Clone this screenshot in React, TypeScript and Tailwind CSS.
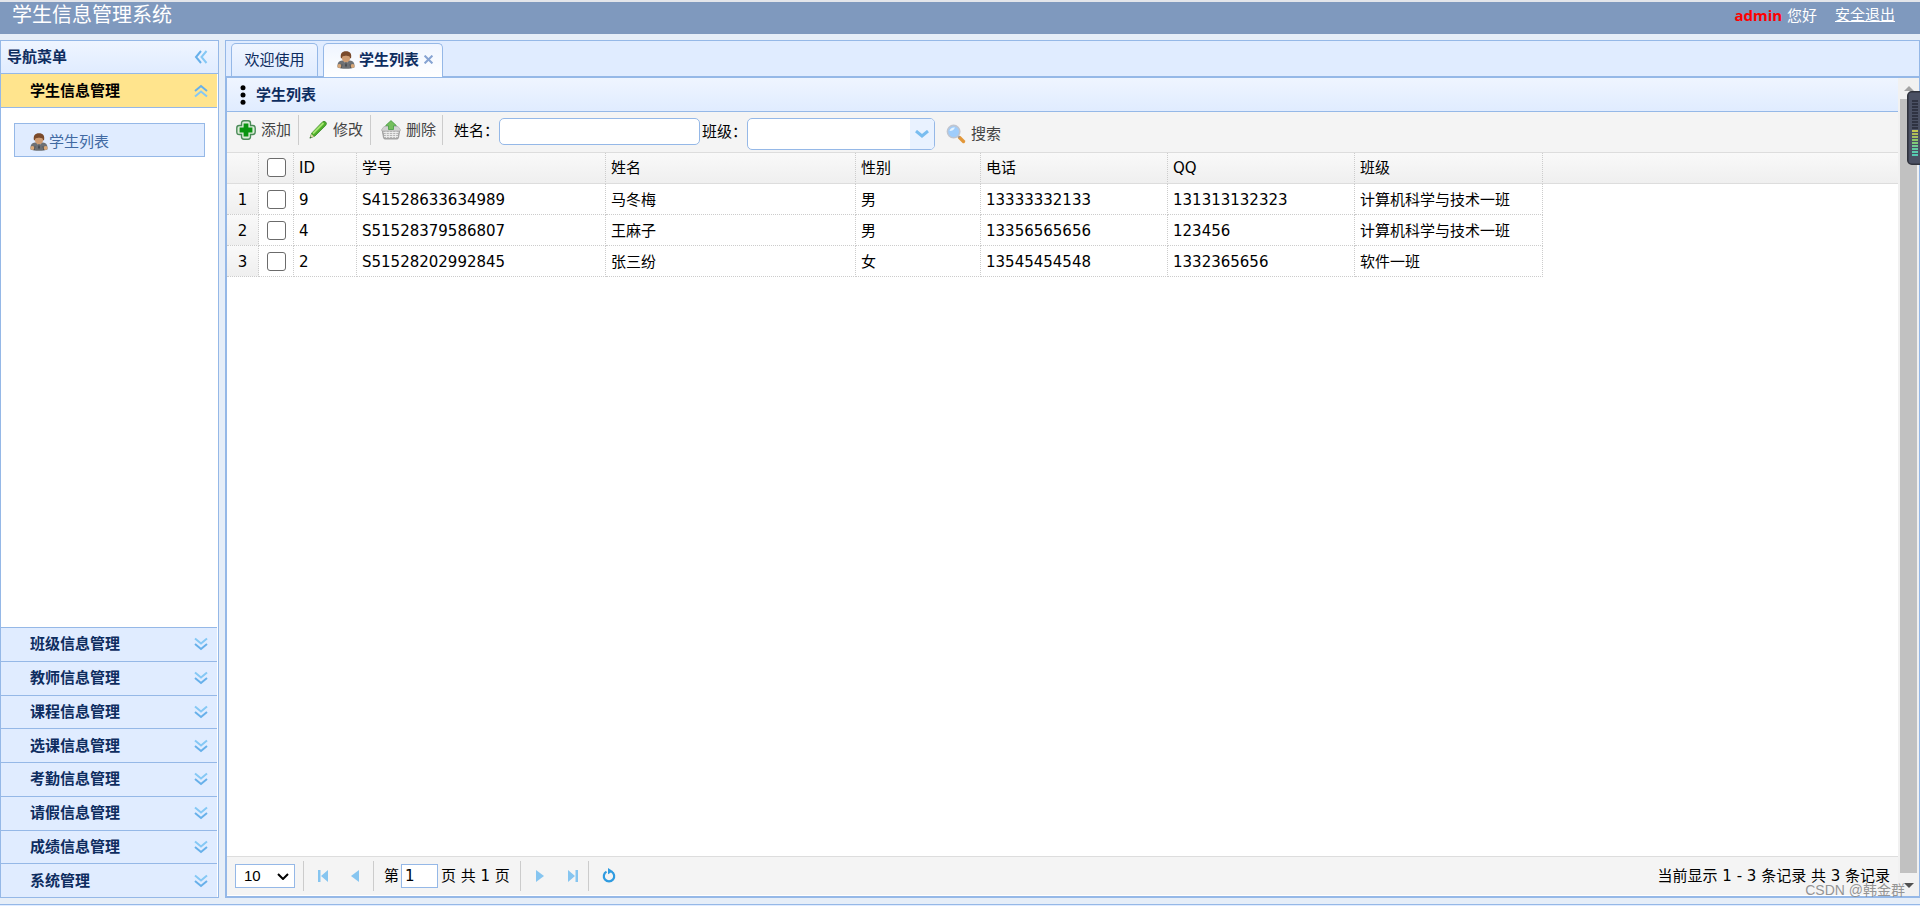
import type { ReactNode } from "react";

type Student = {
  id: number;
  sn: string;
  name: string;
  sex: string;
  mobile: string;
  qq: string;
  clazz: string;
};

const students: Student[] = [
  { id: 9, sn: "S41528633634989", name: "马冬梅", sex: "男", mobile: "13333332133", qq: "131313132323", clazz: "计算机科学与技术一班" },
  { id: 4, sn: "S51528379586807", name: "王麻子", sex: "男", mobile: "13356565656", qq: "123456", clazz: "计算机科学与技术一班" },
  { id: 2, sn: "S51528202992845", name: "张三纷", sex: "女", mobile: "13545454548", qq: "1332365656", clazz: "软件一班" },
];

const menus = [
  "班级信息管理",
  "教师信息管理",
  "课程信息管理",
  "选课信息管理",
  "考勤信息管理",
  "请假信息管理",
  "成绩信息管理",
  "系统管理",
];

const columns = ["ID", "学号", "姓名", "性别", "电话", "QQ", "班级"];

const UserIcon = () => (
  <svg className="size-[18px] shrink-0" viewBox="0 0 18 18">
    <path d="M.6 16.500C0 12.500 1.500 9.800 5 9.500h8c3.500.3 5 3 4.400 7-3 1.800-13.800 1.800-16.800 0z" fill="#6d7074" />
    <path d="M6.500 9.500L9 14l2.500-4.500z" fill="#a9abae" />
    <path d="M8.400 11h1.200l.4 3.500-1 2-1-2z" fill="#4a4c50" />
    <path d="M4 17l1-3.500M14 17l-1-3.500" stroke="#45484c" strokeWidth="1" />
    <circle cx="2.400" cy="15" r="2" fill="#d9a878" />
    <circle cx="15.600" cy="15" r="2" fill="#d9a878" />
    <path d="M5 4.500h8v2.800c0 2.600-2 4-4 4s-4-1.400-4-4z" fill="#cf9c72" />
    <path d="M4 7.500C3 2.500 5 .3 9 .3s6 2.200 5 7.200l-1-.5c0-1.500-.8-2.300-4-2.300S5 5.500 5 7z" fill="#7a4a2b" />
  </svg>
);

const AddIcon = () => (
  <svg className="size-5" viewBox="0 0 20 20">
    <path d="M5.500 3.200Q5.500.8 7.900.8h4.200q2.400 0 2.400 2.400v2.300h2.300q2.400 0 2.400 2.400v4.200q0 2.400-2.400 2.400h-2.300v2.300q0 2.400-2.400 2.400H7.900q-2.400 0-2.400-2.400v-2.300H3.200Q.8 14.500.8 12.100V7.900q0-2.400 2.400-2.400h2.300z" fill="#dcecd9" stroke="#4a8a57" strokeWidth="1.400" />
    <path d="M7.600 3.600h4.800v4h4v4.800h-4v4H7.600v-4h-4V7.600h4z" fill="#0a9410" />
  </svg>
);

const EditIcon = () => (
  <svg className="size-5" viewBox="0 0 20 20">
    <path d="M2 18l1.800-5L14.200 2.200q1.800-1.800 3.500-.2 1.600 1.500 0 3.400L7 16z" fill="#4dae2a" stroke="#3b8628" strokeWidth=".8" />
    <path d="M5 13.500L15.500 3" stroke="#a5e36f" strokeWidth="1.800" />
    <path d="M2 18l1.300-4L6 16.400z" fill="#ddd3a5" />
    <path d="M1.600 18.500l.8-2 1.300 1.200z" fill="#356a35" />
  </svg>
);

const RemoveIcon = () => (
  <svg className="size-5" viewBox="0 0 20 20">
    <path d="M1.200 10h17.600l-1.300 7.700q-.2 1.300-1.500 1.300H4q-1.300 0-1.500-1.300z" fill="#b4b4b4" stroke="#8f8f8f" strokeWidth=".8" />
    <path d="M2.500 12.500h15M3 14.500h14M3 16.500h14M5 11l.6 7M8.300 11v7M11.700 11v7M15 11l-.6 7" stroke="#efefef" strokeWidth=".9" />
    <path d="M3 6.500h14l2.300 3q.4 1.500-1 1.500H1.700q-1.400 0-1-1.500z" fill="#d3d3d3" stroke="#adadad" strokeWidth=".7" />
    <path d="M10 .6l5.400 5H12.500V9.500h-5V5.600H4.600z" fill="#74bf5c" stroke="#469a43" strokeWidth=".8" />
  </svg>
);

const SearchIcon = () => (
  <svg className="size-5" viewBox="0 0 20 20">
    <path d="M13.500 13.500l4 4" stroke="#e29739" strokeWidth="3.400" strokeLinecap="round" />
    <path d="M11.500 11.500l2 2" stroke="#999" strokeWidth="2" />
    <circle cx="7.600" cy="7.600" r="6.200" fill="#9fcdfb" stroke="#c0c5cf" strokeWidth="1.600" />
    <path d="M3.500 7q1-4 5.500-3.500Q7.500 7 3.500 7z" fill="#e6f4ff" />
  </svg>
);

const DoubleChevron = ({ className = "" }: { className?: string }) => (
  <svg className={`size-[14px] ${className}`} viewBox="0 0 14 14" fill="none" strokeWidth="2">
    <path d="M1 1.500l6 5 6-5" stroke="#85c8f5" />
    <path d="M1 7l6 5 6-5" stroke="#67b0ea" />
  </svg>
);

const Separator = () => <span className="h-[30px] w-px shrink-0 bg-[#ccc]" />;

const ToolButton = ({ icon, children }: { icon: ReactNode; children: ReactNode }) => (
  <button type="button" className="flex h-[30px] items-center gap-[5px] text-[#444]">
    {icon}
    {children}
  </button>
);

const PageButton = ({ label, d }: { label: string; d: string }) => (
  <button type="button" aria-label={label} className="flex size-[30px] items-center justify-center">
    <svg className="size-4" viewBox="0 0 16 16" fill="#86c5f0">
      <path d={d} />
    </svg>
  </button>
);

const Header = () => (
  <header className="flex h-[34px] shrink-0 items-start justify-between border-t-2 border-[#e3e5ea] bg-[#7f99be] pr-[25px] pl-3 text-white">
    <h1 className="text-xl leading-[26px]">学生信息管理系统</h1>
    <div className="flex gap-[18px] leading-[26px]">
      <span>
        <b className="font-['Open_Sans','Noto_Sans_CJK_SC',sans-serif] text-[#f00]">admin</b> 您好
      </span>
      <a href="#" className="underline">安全退出</a>
    </div>
  </header>
);

const Sidebar = () => (
  <aside className="flex w-[219px] shrink-0 flex-col border border-[#95b8e7] bg-white">
    <div className="flex h-[33px] shrink-0 items-center justify-between border-b border-[#95b8e7] bg-linear-to-b from-[#eff5ff] to-[#e0ecff] pr-[10px] pl-[6px]">
      <h2 className="font-bold text-[#0e2d5f]">导航菜单</h2>
      <button type="button" aria-label="收起">
        <DoubleChevron className="rotate-90" />
      </button>
    </div>
    <button type="button" className="mr-px flex h-[34px] shrink-0 items-center justify-between border-b border-[#95b8e7] bg-[#ffe48d] pr-[9px] pl-[29px] font-bold text-black">
      学生信息管理
      <DoubleChevron className="rotate-180" />
    </button>
    <div className="flex-1 px-[13px] py-[15px]">
      <a href="#" className="flex h-[34px] items-center gap-px border border-[#95b8e7] bg-[#e0ecff] pt-1 pl-[15px] text-[#416aa3]">
        <UserIcon />
        学生列表
      </a>
    </div>
    <nav className="mr-px flex h-[270px] shrink-0 flex-col">
      {menus.map((menu) => (
        <button type="button" key={menu} className="flex flex-1 items-center justify-between border-t border-[#95b8e7] bg-[#e0ecff] pr-[9px] pl-[29px] font-bold text-[#0e2d5f]">
          {menu}
          <DoubleChevron />
        </button>
      ))}
    </nav>
  </aside>
);

const Tabs = () => (
  <div className="flex h-[38px] shrink-0 items-end gap-[5px] border-t border-r border-b-2 border-[#95b8e7] bg-[#e0ecff] pl-[5px]">
    <button type="button" className="h-[33px] w-[87px] rounded-t-[5px] border border-b-0 border-[#95b8e7] bg-linear-to-b from-[#eff5ff] to-[#e0ecff] text-[#0e2d5f]">
      欢迎使用
    </button>
    <div className="-mb-px flex h-[34px] w-[120px] items-center rounded-t-[5px] border border-b-0 border-[#95b8e7] bg-linear-to-b from-[#eff5ff] to-white pb-0.5 pl-[13px] font-bold text-[#0e2d5f]">
      <UserIcon />
      <button type="button" className="ml-1">学生列表</button>
      <button type="button" aria-label="关闭" className="ml-[5px]">
        <svg className="size-[9px]" viewBox="0 0 8 8" stroke="#86a3d2" strokeWidth="1.800">
          <path d="M.5.5l7 7M7.500.5l-7 7" />
        </svg>
      </button>
    </div>
  </div>
);

const Toolbar = () => (
  <div className="flex h-[41px] shrink-0 items-start border-b border-[#ddd] bg-[#f4f4f4] pt-[3px] pl-[9px]">
    <div className="flex gap-[7px]">
      <ToolButton icon={<AddIcon />}>添加</ToolButton>
      <Separator />
    </div>
    <div className="ml-[9px] flex gap-[7px]">
      <ToolButton icon={<EditIcon />}>修改</ToolButton>
      <Separator />
    </div>
    <div className="ml-[10px] flex gap-[6px]">
      <ToolButton icon={<RemoveIcon />}>删除</ToolButton>
      <Separator />
    </div>
    <label htmlFor="studentName" className="ml-[11px] leading-[32px]">姓名：</label>
    <input id="studentName" className="mt-[3px] h-[27px] w-[201px] rounded-[5px] border border-[#95b8e7] bg-white px-1 outline-none" />
    <label htmlFor="clazzList" className="ml-[2px] leading-[34px]">班级：</label>
    <div className="relative mt-[3px] h-8 w-[188px] overflow-hidden rounded-[5px] border border-[#95b8e7] bg-white">
      <select id="clazzList" defaultValue="" className="size-full appearance-none px-1 outline-none">
        <option value=""></option>
        <option>计算机科学与技术一班</option>
        <option>软件一班</option>
      </select>
      <span className="pointer-events-none absolute inset-y-0 right-0 flex w-6 items-center justify-center bg-[#e9f2ff]">
        <svg className="h-2 w-[14px]" viewBox="0 0 14 8" fill="none" stroke="#79bdf0" strokeWidth="3">
          <path d="M1 1l6 5 6-5" />
        </svg>
      </span>
    </div>
    <div className="mt-1 ml-[11px]">
      <ToolButton icon={<SearchIcon />}>搜索</ToolButton>
    </div>
  </div>
);

const cell = "border-r border-b border-dotted border-[#ccc] px-[5px]";
const textCell = "border-r border-b border-dotted border-[#ccc] px-[5px] pt-0.5";
const headCell = "border-r border-b border-[#ddd] border-r-[#ccc] px-[5px] font-normal [border-right-style:dotted]";
const checkbox = "mx-auto block size-[19px] appearance-none rounded-[3px] border border-[#6b6b6b] bg-white";

const StudentTable = () => (
  <table className="w-full table-fixed border-separate border-spacing-0 text-left">
    <colgroup>
      <col className="w-8" />
      <col className="w-[35px]" />
      <col className="w-[63px]" />
      <col className="w-[249px]" />
      <col className="w-[250px]" />
      <col className="w-[125px]" />
      <col className="w-[187px]" />
      <col className="w-[187px]" />
      <col className="w-[188px]" />
      <col />
    </colgroup>
    <thead>
      <tr className="h-[31px] bg-linear-to-b from-[#f9f9f9] to-[#efefef]">
        <th className={headCell} />
        <th className={`${headCell} pb-0.5`}>
          <input type="checkbox" aria-label="全选" className={checkbox} />
        </th>
        {columns.map((column) => (
          <th key={column} className={headCell}>
            {column}
          </th>
        ))}
        <th className="border-b border-[#ddd]" />
      </tr>
    </thead>
    <tbody>
      {students.map((student, index) => (
        <tr key={student.id} className="h-[31px]">
          <td className={`${textCell} bg-linear-to-b from-[#f9f9f9] to-[#efefef] text-center`}>{index + 1}</td>
          <td className={cell}>
            <input type="checkbox" aria-label={student.name} className={checkbox} />
          </td>
          <td className={textCell}>{student.id}</td>
          <td className={textCell}>{student.sn}</td>
          <td className={textCell}>{student.name}</td>
          <td className={textCell}>{student.sex}</td>
          <td className={textCell}>{student.mobile}</td>
          <td className={textCell}>{student.qq}</td>
          <td className={textCell}>{student.clazz}</td>
        </tr>
      ))}
    </tbody>
  </table>
);

const Pagination = () => (
  <footer className="mb-px flex h-[39px] shrink-0 items-center border-t border-[#ddd] bg-[#f4f4f4] pr-2 pl-2">
    <div className="relative">
      <select aria-label="每页条数" className="block h-6 w-[60px] appearance-none border border-[#95b8e7] bg-white pl-2 font-['Liberation_Sans',sans-serif] text-[15px] leading-[22px] outline-none">
        <option>10</option>
        <option>20</option>
        <option>50</option>
      </select>
      <svg className="pointer-events-none absolute top-[9px] right-[6px] h-[7px] w-3" viewBox="0 0 12 7" fill="none" stroke="#000" strokeWidth="2">
        <path d="M1 1l5 5 5-5" />
      </svg>
    </div>
    <div className="ml-2 flex items-center">
      <Separator />
      <span className="w-1" />
      <PageButton label="首页" d="M3 2h2.500v12H3zM13 2v12L6 8z" />
      <span className="w-0.5" />
      <PageButton label="上一页" d="M12 2v12L4 8z" />
      <span className="w-[3px]" />
      <Separator />
    </div>
    <label htmlFor="pageNumber" className="ml-[10px]">第</label>
    <input id="pageNumber" defaultValue="1" className="ml-[2px] h-6 w-[37px] border border-[#95b8e7] bg-white px-[3px] outline-none" />
    <span className="mr-[10px] ml-[3px]">页 共 1 页</span>
    <Separator />
    <span className="w-1" />
    <PageButton label="下一页" d="M4 2v12l8-6z" />
    <span className="w-[3px]" />
    <PageButton label="尾页" d="M3 2v12l7-6zM10.500 2H13v12h-2.500z" />
    <Separator />
    <button type="button" aria-label="刷新" className="ml-3">
      <svg className="size-4" viewBox="0 0 16 16" fill="none">
        <path d="M10.500 3.600a5.200 5.200 0 1 1-5 0" stroke="#2f9be0" strokeWidth="2.200" />
        <path d="M7 0l5 3.200L7 6.200z" fill="#2f9be0" />
      </svg>
    </button>
    <span className="ml-auto">当前显示 1 - 3 条记录 共 3 条记录</span>
  </footer>
);

// fake scrollbar of the tab body
const Scrollbar = () => (
  <div className="flex w-[21px] shrink-0 flex-col items-center bg-[#f1f1f1]">
    <svg className="my-2 h-[5px] w-[10px]" viewBox="0 0 10 5" fill="#a3a3a3">
      <path d="M0 5l5-5 5 5z" />
    </svg>
    <div className="w-[17px] flex-1 bg-[#c1c1c1]" />
    <svg className="mt-[10px] mb-2 h-[5px] w-[10px]" viewBox="0 0 10 5" fill="#505050">
      <path d="M0 0l5 5 5-5z" />
    </svg>
  </div>
);

const meter = [
  "#2f3342", "#2f3342", "#2f3342", "#2f3342", "#2f3342", "#2f3342", "#2f3342", "#2f3342", "#2f3342", "#2f3342",
  "#c3c850", "#b0bd56", "#a5c060", "#8cc866", "#80cc78", "#70cc90", "#62cca0", "#5accac", "#54cab2",
];

const LevelMeter = () => (
  <svg className="absolute top-[91px] right-0 h-[74px] w-[13px]" viewBox="0 0 13 74">
    <rect x=".8" y=".8" width="18" height="72.400" rx="4" fill="#4b5164" stroke="#30333d" strokeWidth="1.600" />
    {meter.map((color, i) => (
      <rect key={i} x="5" y={9 + i * 3} width="6" height="2" fill={color} />
    ))}
  </svg>
);

const App = () => {
  return (
    <div className="relative flex h-screen flex-col overflow-hidden bg-[#e6eef8] font-['DejaVu_Sans','Noto_Sans_CJK_SC',sans-serif] text-[15px] leading-5 text-black">
      <Header />
      <div className="flex min-h-0 flex-1 gap-[6px] pt-[6px] pb-[6px]">
        <Sidebar />
        <main className="flex min-w-0 flex-1 flex-col border-l border-[#95b8e7]">
          <Tabs />
          <div className="flex min-h-0 flex-1 border-r border-b-2 border-l border-[#95b8e7] bg-white">
            <section className="flex min-w-0 flex-1 flex-col">
              <div className="flex h-[34px] shrink-0 items-center border-b border-[#95b8e7] bg-linear-to-b from-[#eff5ff] to-[#e0ecff] pl-[13px]">
                <svg className="h-5 w-[6px]" viewBox="0 0 6 20">
                  <circle cx="3" cy="2.700" r="2.500" />
                  <circle cx="3" cy="10" r="2.500" />
                  <circle cx="3" cy="17.300" r="2.500" />
                </svg>
                <h2 className="ml-[10px] font-bold text-[#0e2d5f]">学生列表</h2>
              </div>
              <Toolbar />
              <div className="min-h-0 flex-1">
                <StudentTable />
              </div>
              <Pagination />
            </section>
            <Scrollbar />
          </div>
        </main>
      </div>
      <div className="h-[2px] shrink-0 border-t border-[#95b8e7] bg-[#e0ecff]" />
      <LevelMeter />
      <span className="absolute right-[15px] bottom-[6px] font-['Liberation_Sans','Noto_Sans_CJK_SC',sans-serif] text-sm text-[#888]/90">CSDN @韩金群</span>
    </div>
  );
};

export default App;
